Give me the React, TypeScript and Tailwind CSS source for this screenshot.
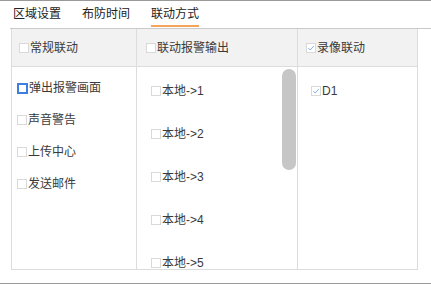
import type { ReactNode } from 'react'

const font = "font-['Liberation_Sans','Noto_Sans_CJK_SC',sans-serif]"

function Box({ checked, focused }: { checked?: boolean; focused?: boolean }) {
    if (focused) {
        return <span className="inline-block w-[11px] h-[11px] border-2 border-[#3d7fe0] bg-white mr-[1px] shrink-0" />
    }
    return (
        <span className="inline-flex items-center justify-center w-[10px] h-[10px] border border-[#d9d9d9] bg-white mr-[1px] shrink-0">
            {checked && (
                <svg viewBox="0 0 10 10" className="w-[8px] h-[8px]">
                    <path d="M1.5 5.2 L4 7.5 L8.5 2.5" fill="none" stroke="#6fa8f0" strokeWidth="1.1" />
                </svg>
            )}
        </span>
    )
}

function Item({ children, checked, focused }: { children: ReactNode; checked?: boolean; focused?: boolean }) {
    return (
        <label className="flex items-center text-[12px] text-[#3a3a3a] leading-none">
            <Box checked={checked} focused={focused} />
            <span>{children}</span>
        </label>
    )
}

export default function App() {
    const tabs = ['区域设置', '布防时间', '联动方式']
    const outputs = [1, 2, 3, 4, 5]

    return (
        <div className={`w-[431px] h-[284px] bg-white border-t border-b border-[#9a9a9a] overflow-hidden ${font}`}>
            {/* Tabs */}
            <div className="flex h-[26px] pl-[13px] gap-[21px]">
                {tabs.map((t, i) => (
                    <div
                        key={t}
                        className={`flex items-center pt-[1px] text-[12px] text-[#222] border-b-2 ${
                            i === 2 ? 'border-[#f5a55a]' : 'border-transparent'
                        }`}
                    >
                        {t}
                    </div>
                ))}
            </div>
            <div className="ml-[10px] mt-[1px] h-px bg-[#c9c9c9]" />

            {/* Table */}
            <div className="ml-[11px] w-[407px] h-[241px] flex border-l border-r border-b border-[#dcdcdc]">
                <div className="w-[125px] flex flex-col border-r border-[#dcdcdc]">
                    <div className="h-[38px] bg-[#f2f2f2] border-b border-[#dcdcdc] flex items-center pl-[7px] pt-[1px]">
                        <Item>常规联动</Item>
                    </div>
                    <div className="flex flex-col pt-[5px] pl-[5px]">
                        {['弹出报警画面', '声音警告', '上传中心', '发送邮件'].map((t, i) => (
                            <div key={t} className="h-[32px] flex items-center">
                                <Item focused={i === 0}>{t}</Item>
                            </div>
                        ))}
                    </div>
                </div>

                <div className="w-[161px] flex flex-col border-r border-[#dcdcdc] min-h-0">
                    <div className="h-[38px] shrink-0 bg-[#f2f2f2] border-b border-[#dcdcdc] flex items-center pl-[9px] pt-[1px]">
                        <Item>联动报警输出</Item>
                    </div>
                    <div className="relative flex-1 min-h-0 overflow-hidden pt-[2px] pl-[14px]">
                        {outputs.map(n => (
                            <div key={n} className="h-[43px] flex items-center">
                                <Item>本地-&gt;{n}</Item>
                            </div>
                        ))}
                        {/* scrollbar thumb */}
                        <div className="absolute right-px top-[2px] w-[14px] h-[101px] rounded-full bg-[#c6c6c6]" />
                    </div>
                </div>

                <div className="flex-1 flex flex-col">
                    <div className="h-[38px] bg-[#f2f2f2] border-b border-[#dcdcdc] flex items-center pl-[8px] pt-[1px]">
                        <Item checked>录像联动</Item>
                    </div>
                    <div className="pt-[2px] pl-[13px]">
                        <div className="h-[43px] flex items-center">
                            <Item checked>D1</Item>
                        </div>
                    </div>
                </div>
            </div>
        </div>
    )
}
